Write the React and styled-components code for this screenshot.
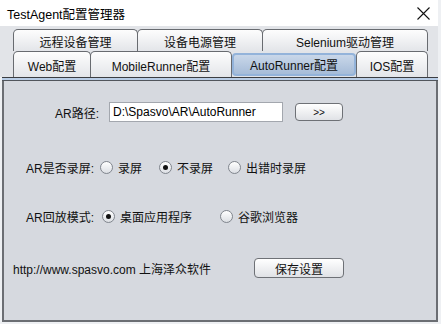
import React from 'react';
import styled, { createGlobalStyle } from 'styled-components';

const FONT = `"Liberation Sans", "Noto Sans CJK SC", Arial, sans-serif`;

const Global = createGlobalStyle`
  html, body { margin: 0; padding: 0; background: #eef0f3; }
  body { font-family: ${FONT}; font-size: 12px; color: #111; }
  * { box-sizing: border-box; }
`;

const Frame = styled.div`
  width: 438px;
  height: 322px;
  display: flex;
  flex-direction: column;
`;

const TitleBar = styled.div`
  height: 26px;
  flex: none;
  background: #ffffff;
  display: flex;
  align-items: center;
  justify-content: space-between;
  padding: 0 8px 0 7px;
  font-size: 12.5px;
  color: #000;
`;

const TabHeader = styled.div`
  height: 51px;
  flex: none;
  padding: 3px 0 0 13px;
  background: #e2e4e8;
  display: flex;
  flex-direction: column;
`;

const TabRow = styled.div`
  display: flex;
  height: ${(p) => p.h}px;
`;

const Tab = styled.div`
  width: ${(p) => p.w}px;
  margin-left: ${(p) => (p.first ? 0 : -1)}px;
  border: 1px solid #686b70;
  border-bottom: none;
  border-radius: 5px 5px 0 0;
  background: linear-gradient(#fdfdfd, #e3e5e9);
  display: flex;
  align-items: center;
  justify-content: center;
  font-size: 12px;
  color: #111;
  padding-top: 1px;
`;

const SelectedTab = styled.div`
  width: ${(p) => p.w}px;
  margin-left: -1px;
  padding: 2px 1px 1px 1px;
  display: flex;
`;

const SelectedFace = styled.div`
  flex: 1;
  border: 2px solid #93b3da;
  border-radius: 4px;
  background: linear-gradient(#c9d7e9, #a6bcd8);
  display: flex;
  align-items: center;
  justify-content: center;
  font-size: 12px;
  color: #111;
`;

const Body = styled.div`
  flex: 1;
  margin-left: 2px;
  display: flex;
  flex-direction: column;
`;

const TopRule = styled.div`
  height: 4px;
  flex: none;
  border-top: 1px solid #3b3d41;
  border-bottom: 1px solid #52565c;
  background: #b9cde6;
`;

const Panel = styled.div`
  flex: 1;
  background: #d6d9df;
  border-left: 2px solid #6b6e73;
  border-right: 2px solid #6b6e73;
  border-bottom: 2px solid #6b6e73;
  display: flex;
  flex-direction: column;
`;

const Row = styled.div`
  height: 20px;
  margin-top: ${(p) => p.top}px;
  padding-left: ${(p) => p.indent}px;
  display: flex;
  align-items: center;
`;

const Label = styled.span`
  font-size: 12px;
  white-space: nowrap;
`;

const PathField = styled.input`
  width: 174px;
  height: 20px;
  margin-left: 10px;
  border: 1px solid #a3a7ae;
  background: #fff;
  padding: 0 3px;
  font-family: ${FONT};
  font-size: 12px;
  color: #000;
  outline: none;
`;

const Button = styled.button`
  width: ${(p) => p.w}px;
  height: ${(p) => p.h}px;
  margin-left: ${(p) => p.ml}px;
  border: 1px solid #6e7176;
  border-radius: 4px;
  background: linear-gradient(#ffffff, #e0e2e6);
  font-family: ${FONT};
  font-size: ${(p) => p.fs}px;
  color: #111;
  padding: 0;
  display: flex;
  align-items: center;
  justify-content: center;
`;

const RadioItem = styled.label`
  display: flex;
  align-items: center;
  gap: 5px;
  margin-left: ${(p) => p.ml}px;
  font-size: 12px;
  white-space: nowrap;
`;

const RadioCircle = styled.span`
  width: 13px;
  height: 13px;
  border-radius: 50%;
  border: 1px solid #80858d;
  background: linear-gradient(#ffffff, #dcdfe4);
  display: flex;
  align-items: center;
  justify-content: center;
  &::after {
    content: '';
    width: 5px;
    height: 5px;
    border-radius: 50%;
    background: ${(p) => (p.checked ? '#111' : 'transparent')};
  }
`;

const Radio = ({ checked, ml, children }) => (
  <RadioItem ml={ml}>
    <RadioCircle checked={checked} />
    {children}
  </RadioItem>
);

const CloseIcon = () => (
  <svg width="13" height="13" viewBox="0 0 13 13">
    <path d="M0.5 0.5 L12.5 12.5 M12.5 0.5 L0.5 12.5" stroke="#111" strokeWidth="1.1" fill="none" />
  </svg>
);

export default function App() {
  return (
    <>
      <Global />
      <Frame>
        <TitleBar>
          <span>TestAgent配置管理器</span>
          <CloseIcon />
        </TitleBar>
        <TabHeader>
          <TabRow h={22}>
            <Tab first w={125}>远程设备管理</Tab>
            <Tab w={126}>设备电源管理</Tab>
            <Tab w={166}>Selenium驱动管理</Tab>
          </TabRow>
          <TabRow h={26}>
            <Tab first w={78}>Web配置</Tab>
            <Tab w={142}>MobileRunner配置</Tab>
            <SelectedTab w={126}>
              <SelectedFace>AutoRunner配置</SelectedFace>
            </SelectedTab>
            <Tab w={72}>IOS配置</Tab>
          </TabRow>
        </TabHeader>
        <Body>
          <TopRule />
          <Panel>
            <Row top={21} indent={51}>
              <Label>AR路径:</Label>
              <PathField readOnly value="D:\Spasvo\AR\AutoRunner" />
              <Button w={48} h={18} ml={12} fs={10}>&gt;&gt;</Button>
            </Row>
            <Row top={35} indent={22}>
              <Label>AR是否录屏:</Label>
              <Radio ml={6}>录屏</Radio>
              <Radio ml={17} checked>不录屏</Radio>
              <Radio ml={15}>出错时录屏</Radio>
            </Row>
            <Row top={29} indent={22}>
              <Label>AR回放模式:</Label>
              <Radio ml={8} checked>桌面应用程序</Radio>
              <Radio ml={28}>谷歌浏览器</Radio>
            </Row>
            <Row top={32} indent={9}>
              <Label>http://www.spasvo.com 上海泽众软件</Label>
              <Button w={90} h={20} ml={43} fs={12}>保存设置</Button>
            </Row>
          </Panel>
        </Body>
      </Frame>
    </>
  );
}
